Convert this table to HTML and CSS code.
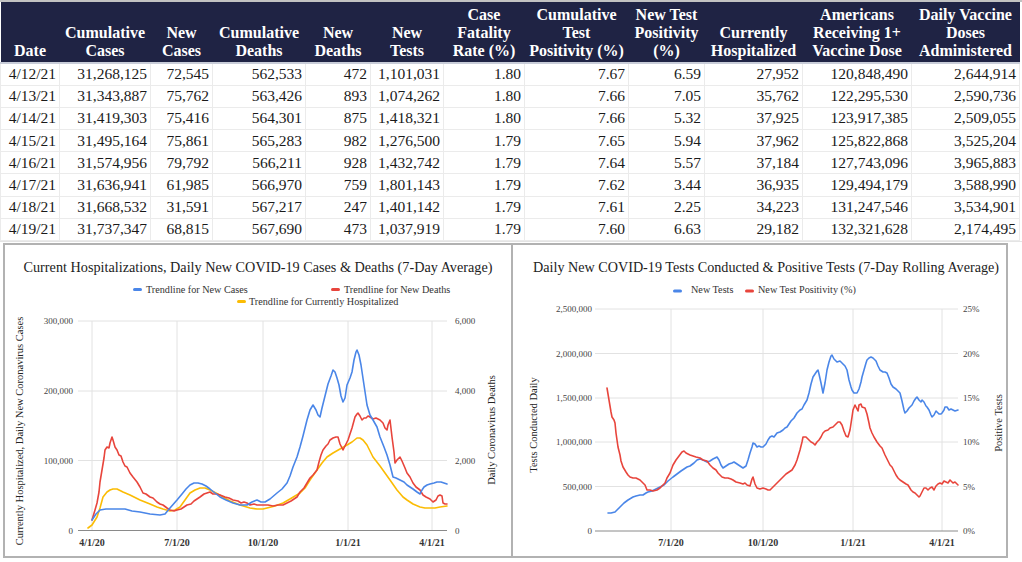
FILE: index.html
```html
<!DOCTYPE html>
<html lang="en">
<head>
<meta charset="utf-8">
<title>COVID-19 Daily Data</title>
<link rel="stylesheet" href="styles.css">
</head>
<body>
<div class="sheet">
  <table class="data">
    <colgroup>
      <col class="w59"><col class="w91"><col class="w62"><col class="w93"><col class="w65"><col class="w73">
      <col class="w81"><col class="w104"><col class="w76"><col class="w98"><col class="w109"><col class="w108">
    </colgroup>
    <thead>
      <tr>
        <th>Date</th>
        <th>Cumulative<br>Cases</th>
        <th>New<br>Cases</th>
        <th>Cumulative<br>Deaths</th>
        <th>New<br>Deaths</th>
        <th>New<br>Tests</th>
        <th>Case<br>Fatality<br>Rate (%)</th>
        <th>Cumulative<br>Test<br>Positivity (%)</th>
        <th>New Test<br>Positivity<br>(%)</th>
        <th>Currently<br>Hospitalized</th>
        <th>Americans<br>Receiving 1+<br>Vaccine Dose</th>
        <th>Daily Vaccine<br>Doses<br>Administered</th>
      </tr>
    </thead>
    <tbody>
      <tr><td>4/12/21</td><td>31,268,125</td><td>72,545</td><td>562,533</td><td>472</td><td>1,101,031</td><td>1.80</td><td>7.67</td><td>6.59</td><td>27,952</td><td>120,848,490</td><td>2,644,914</td></tr>
      <tr><td>4/13/21</td><td>31,343,887</td><td>75,762</td><td>563,426</td><td>893</td><td>1,074,262</td><td>1.80</td><td>7.66</td><td>7.05</td><td>35,762</td><td>122,295,530</td><td>2,590,736</td></tr>
      <tr><td>4/14/21</td><td>31,419,303</td><td>75,416</td><td>564,301</td><td>875</td><td>1,418,321</td><td>1.80</td><td>7.66</td><td>5.32</td><td>37,925</td><td>123,917,385</td><td>2,509,055</td></tr>
      <tr><td>4/15/21</td><td>31,495,164</td><td>75,861</td><td>565,283</td><td>982</td><td>1,276,500</td><td>1.79</td><td>7.65</td><td>5.94</td><td>37,962</td><td>125,822,868</td><td>3,525,204</td></tr>
      <tr><td>4/16/21</td><td>31,574,956</td><td>79,792</td><td>566,211</td><td>928</td><td>1,432,742</td><td>1.79</td><td>7.64</td><td>5.57</td><td>37,184</td><td>127,743,096</td><td>3,965,883</td></tr>
      <tr><td>4/17/21</td><td>31,636,941</td><td>61,985</td><td>566,970</td><td>759</td><td>1,801,143</td><td>1.79</td><td>7.62</td><td>3.44</td><td>36,935</td><td>129,494,179</td><td>3,588,990</td></tr>
      <tr><td>4/18/21</td><td>31,668,532</td><td>31,591</td><td>567,217</td><td>247</td><td>1,401,142</td><td>1.79</td><td>7.61</td><td>2.25</td><td>34,223</td><td>131,247,546</td><td>3,534,901</td></tr>
      <tr><td>4/19/21</td><td>31,737,347</td><td>68,815</td><td>567,690</td><td>473</td><td>1,037,919</td><td>1.79</td><td>7.60</td><td>6.63</td><td>29,182</td><td>132,321,628</td><td>2,174,495</td></tr>
    </tbody>
  </table>

  <div class="charts">
    <div class="chart chart-left">
      <svg width="506" height="311" viewBox="5 245 506 311">
        <text class="ttl" x="258" y="272" text-anchor="middle" textLength="469" lengthAdjust="spacingAndGlyphs">Current Hospitalizations, Daily New COVID-19 Cases &amp; Deaths (7-Day Average)</text>
        <rect class="k-blue" x="133" y="288" width="9" height="3" rx="1.5"/>
        <text class="lg" x="146" y="292.5">Trendline for New Cases</text>
        <rect class="k-red" x="331" y="288" width="9" height="3" rx="1.5"/>
        <text class="lg" x="344" y="292.5">Trendline for New Deaths</text>
        <rect class="k-yel" x="237" y="300" width="9" height="3" rx="1.5"/>
        <text class="lg" x="249" y="304.5">Trendline for Currently Hospitalized</text>

        <g class="grid">
          <line x1="78" y1="321" x2="447" y2="321"/>
          <line x1="78" y1="391" x2="447" y2="391"/>
          <line x1="78" y1="460.5" x2="447" y2="460.5"/>
          <line x1="92" y1="321" x2="92" y2="530"/>
          <line x1="177" y1="321" x2="177" y2="530"/>
          <line x1="263" y1="321" x2="263" y2="530"/>
          <line x1="348" y1="321" x2="348" y2="530"/>
          <line x1="432" y1="321" x2="432" y2="530"/>
        </g>
        <line class="base" x1="78" y1="530.5" x2="447" y2="530.5"/>

        <g class="ax" text-anchor="end">
          <text x="73" y="324">300,000</text>
          <text x="73" y="394">200,000</text>
          <text x="73" y="463.5">100,000</text>
          <text x="73" y="533.5">0</text>
        </g>
        <g class="ax">
          <text x="455" y="324">6,000</text>
          <text x="455" y="394">4,000</text>
          <text x="455" y="463.5">2,000</text>
          <text x="455" y="533.5">0</text>
        </g>
        <g class="xl" text-anchor="middle">
          <text x="92" y="546">4/1/20</text>
          <text x="177" y="546">7/1/20</text>
          <text x="263" y="546">10/1/20</text>
          <text x="348" y="546">1/1/21</text>
          <text x="432" y="546">4/1/21</text>
        </g>
        <text class="at" text-anchor="middle" transform="translate(23 431) rotate(-90)">Currently Hospitalized, Daily New Coronavirus Cases</text>
        <text class="at" text-anchor="middle" transform="translate(495 430) rotate(-90)">Daily Coronavirus Deaths</text>

        <polyline class="ln-yel" points="88,528 92,525 97,517 100,508 103,497 107,492 110,490 113,489 117,489 123,492 130,495 140,500 150,504 157,507 163,509 170,511 175,510 180,507 185,500 190,493 195,490 200,488 205,488 210,490 216,493 223,497 230,501 240,505 250,508 257,509 263,509 267,508 275,506 283,503 290,499 300,493 305,488 310,480 317,470 322,463 327,457 333,453 340,449 347,445 352,442 357,438 360,438 363,440 367,445 373,457 380,466 385,473 390,480 397,490 403,497 407,500 413,504 420,507 425,508 430,508 435,508 440,507 447,506"/>
        <polyline class="ln-red" points="92,520 95,510 97,503 99,492 100,482 102,470 104,458 105,450 107,447 109,448 110,443 112,437 113,440 115,447 117,450 119,455 121,456 123,462 125,466 127,467 130,473 133,477 137,482 140,487 143,493 146,494 150,497 153,498 157,502 160,504 163,505 167,508 170,510 174,511 177,510 181,509 184,507 187,505 191,504 194,501 197,499 200,497 204,494 207,493 210,492 213,494 217,494 220,495 225,497 229,498 233,500 238,501 241,503 244,502 247,503 250,505 254,504 257,505 263,505 268,505 273,506 278,505 283,505 287,503 291,501 294,499 297,497 300,492 304,488 307,483 310,478 313,475 317,470 319,462 321,455 323,450 326,446 328,444 330,440 333,438 336,437 338,437 340,444 343,450 345,446 348,440 350,434 352,428 355,417 357,414 358,413 360,416 362,420 364,418 366,418 368,416 370,417 373,419 376,418 380,420 383,423 385,428 387,430 388,425 390,420 392,437 394,452 395,463 397,460 400,457 402,461 405,468 407,473 410,477 413,483 416,487 420,490 423,495 426,497 430,499 433,502 436,500 438,496 440,495 442,496 443,503 445,504 447,504"/>
        <polyline class="ln-blue" points="92,520 96,514 100,510 106,509 115,509 125,509 132,511 140,512 150,514 160,515 165,514 170,508 177,500 182,494 186,489 190,485 194,483 198,483 202,484 206,486 210,489 215,493 220,497 226,500 233,503 240,505 247,505 252,502 257,500 261,502 265,502 270,499 277,493 282,489 287,483 290,476 293,467 297,457 300,447 303,436 307,420 310,410 313,405 316,410 318,415 320,417 322,408 325,396 328,384 331,376 333,370 335,372 337,378 339,385 341,396 343,402 345,398 347,385 350,378 352,372 354,360 356,352 357,350 359,355 361,365 364,385 367,405 370,415 373,420 377,427 380,437 384,447 387,455 390,465 393,477 396,478 400,480 404,482 407,485 410,487 413,489 417,492 420,494 422,490 424,487 427,485 430,484 434,483 437,482 441,482 444,483 447,484"/>
      </svg>
    </div>
    <div class="chart chart-right">
      <svg width="493" height="311" viewBox="513 245 493 311">
        <text class="ttl" x="766" y="272" text-anchor="middle" textLength="466" lengthAdjust="spacingAndGlyphs">Daily New COVID-19 Tests Conducted &amp; Positive Tests (7-Day Rolling Average)</text>
        <rect class="k-blue" x="673" y="289.5" width="9" height="3" rx="1.5"/>
        <text class="lg" x="691" y="292.5">New Tests</text>
        <rect class="k-red" x="745" y="289.5" width="9" height="3" rx="1.5"/>
        <text class="lg" x="758" y="292.5">New Test Positivity (%)</text>

        <g class="grid">
          <line x1="595" y1="309" x2="958" y2="309"/>
          <line x1="595" y1="353.5" x2="958" y2="353.5"/>
          <line x1="595" y1="398" x2="958" y2="398"/>
          <line x1="595" y1="442" x2="958" y2="442"/>
          <line x1="595" y1="486.5" x2="958" y2="486.5"/>
          <line x1="671" y1="309" x2="671" y2="531"/>
          <line x1="763" y1="309" x2="763" y2="531"/>
          <line x1="853" y1="309" x2="853" y2="531"/>
          <line x1="942" y1="309" x2="942" y2="531"/>
        </g>
        <line class="base" x1="595" y1="531" x2="958" y2="531"/>

        <g class="ax" text-anchor="end">
          <text x="592" y="312">2,500,000</text>
          <text x="592" y="356.5">2,000,000</text>
          <text x="592" y="401">1,500,000</text>
          <text x="592" y="445">1,000,000</text>
          <text x="592" y="489.5">500,000</text>
          <text x="592" y="534">0</text>
        </g>
        <g class="ax">
          <text x="963" y="312">25%</text>
          <text x="963" y="356.5">20%</text>
          <text x="963" y="401">15%</text>
          <text x="963" y="445">10%</text>
          <text x="963" y="489.5">5%</text>
          <text x="963" y="534">0%</text>
        </g>
        <g class="xl" text-anchor="middle">
          <text x="671" y="546">7/1/20</text>
          <text x="763" y="546">10/1/20</text>
          <text x="853" y="546">1/1/21</text>
          <text x="942" y="546">4/1/21</text>
        </g>
        <text class="at" text-anchor="middle" transform="translate(537 425) rotate(-90)">Tests Conducted Daily</text>
        <text class="at" text-anchor="middle" transform="translate(1002 423) rotate(-90)">Positive Tests</text>

        <polyline class="ln-blue" points="608,513 611,513 615,512 617,510 620,507 624,503 628,500 633,497 636,496 640,495 643,495 646,493 648,492 652,491 656,489 660,487 664,485 668,481 673,477 677,474 681,471 684,469 687,467 690,466 694,463 697,460 700,459 703,460 705,461 707,462 710,461 713,459 715,458 717,457 719,460 721,465 723,468 726,466 729,464 732,463 734,462 737,464 740,466 743,468 746,466 748,460 750,453 752,447 753,443 755,444 757,447 759,446 761,447 763,447 766,444 768,440 770,437 772,436 774,437 777,433 780,432 783,430 785,428 787,427 789,424 791,421 794,418 797,413 800,410 802,409 804,405 807,400 809,393 811,384 813,377 815,374 817,371 818,370 819,374 821,383 823,393 825,383 827,370 829,362 831,356 832,355 834,359 837,362 840,361 842,363 845,366 847,370 849,380 851,387 852,390 854,393 857,393 859,389 861,382 862,377 864,370 866,363 867,360 869,358 871,357 873,358 876,361 878,366 880,370 883,372 885,372 887,373 889,378 891,384 893,387 896,389 898,391 900,393 902,401 904,410 905,413 907,411 909,408 912,405 914,401 916,398 917,397 919,400 921,402 922,400 924,402 926,406 927,407 929,410 931,415 932,417 934,415 936,411 937,412 939,414 941,414 942,413 944,410 945,407 947,407 949,410 951,409 953,410 955,411 958,410"/>
        <polyline class="ln-red" points="607,388 609,400 611,412 612,417 614,420 615,423 616,433 617,440 618,447 620,455 621,461 623,467 626,472 628,475 630,477 633,478 636,478 640,480 643,483 645,485 647,490 650,490 653,491 657,490 660,488 663,485 665,483 667,478 670,473 673,465 676,460 679,456 682,452 684,451 686,453 690,455 693,456 696,457 700,458 703,460 707,461 710,465 713,468 716,470 718,473 720,475 722,477 725,478 728,478 731,479 733,480 736,482 740,483 743,484 745,483 747,485 750,486 752,479 753,477 755,484 757,488 760,489 763,488 766,489 768,490 770,490 773,487 775,485 777,483 780,480 783,477 786,474 789,472 792,470 795,465 797,460 800,450 802,442 803,437 806,437 809,440 811,442 813,443 815,445 817,442 819,440 821,437 823,433 825,431 828,430 830,428 833,427 836,424 838,422 840,422 842,425 844,431 846,436 848,437 850,430 852,417 853,410 855,405 857,409 858,411 859,405 861,404 862,407 865,408 867,414 869,423 870,428 872,433 874,437 877,442 880,446 882,448 885,455 888,461 890,465 892,467 894,471 896,475 898,478 900,480 903,482 906,484 908,485 911,490 913,492 915,493 917,495 919,497 920,496 922,492 924,488 926,488 928,490 930,488 932,487 934,490 936,486 938,484 940,483 942,484 944,481 946,482 948,483 950,480 953,483 955,482 958,485"/>
      </svg>
    </div>
  </div>
</div>
</body>
</html>
```

FILE: styles.css
```css
* { box-sizing: border-box; }

html, body {
  margin: 0;
  padding: 0;
  background: #ffffff;
}

body {
  font-family: "Liberation Serif", "Times New Roman", serif;
  color: #1c1c1c;
}

.sheet {
  width: 1022px;
  height: 562px;
  overflow: hidden;
  border-top: 2px solid #c2c2c2;
}

/* ---------- data table ---------- */
.data {
  border-collapse: collapse;
  table-layout: fixed;
  width: 1019px;
}

.w59 { width: 59px; }
.w91 { width: 91px; }
.w62 { width: 62px; }
.w93 { width: 93px; }
.w65 { width: 65px; }
.w73 { width: 73px; }
.w81 { width: 81px; }
.w104 { width: 104px; }
.w76 { width: 76px; }
.w98 { width: 98px; }
.w109 { width: 109px; }
.w108 { width: 108px; }

.data th {
  background: #1f2344;
  color: #ffffff;
  font-weight: bold;
  font-size: 16px;
  line-height: 18px;
  height: 61px;
  padding: 0 1px 2px;
  vertical-align: bottom;
  text-align: center;
  white-space: nowrap;
  border-bottom: 2px solid #c8ccd8;
}

.data td {
  font-size: 15.5px;
  line-height: 20px;
  height: 22.2px;
  padding: 0 3px 0 0;
  text-align: right;
  white-space: nowrap;
  color: #1a1a1a;
  border-left: 1px solid #ebebeb;
  border-right: 1px solid #ebebeb;
  border-bottom: 1px solid #ebebeb;
}

/* ---------- charts ---------- */
.charts {
  display: flex;
  padding: 1px 0 0 3px;
  border-top: 1px solid #e4e4e4;
}

.chart {
  height: 315px;
  border: 2px solid #b2b2b2;
  background: #ffffff;
}

.chart-left { width: 510px; }

.chart-right {
  width: 495px;
  border-left: 0;
}

.chart svg { display: block; }

.ttl {
  font-family: "Liberation Serif", serif;
  font-size: 14.1px;
  fill: #222222;
}

.lg {
  font-family: "Liberation Serif", serif;
  font-size: 10.2px;
  fill: #333333;
}

.ax text {
  font-family: "Liberation Serif", serif;
  font-size: 9px;
  fill: #444444;
}

.xl text {
  font-family: "Liberation Serif", serif;
  font-size: 10px;
  font-weight: bold;
  fill: #333333;
}

.at {
  font-family: "Liberation Serif", serif;
  font-size: 10.5px;
  fill: #222222;
}

.grid line {
  stroke: #e2e2e2;
  stroke-width: 1;
}

.base {
  stroke: #8a8a8a;
  stroke-width: 1;
}

.k-blue { fill: #4a86e8; }
.k-red { fill: #e8453c; }
.k-yel { fill: #fbbc04; }

.ln-blue, .ln-red, .ln-yel {
  fill: none;
  stroke-width: 1.6;
  stroke-linejoin: round;
  stroke-linecap: round;
}

.ln-blue { stroke: #4a86e8; }
.ln-red { stroke: #e8453c; }
.ln-yel { stroke: #fbbc04; }
```
